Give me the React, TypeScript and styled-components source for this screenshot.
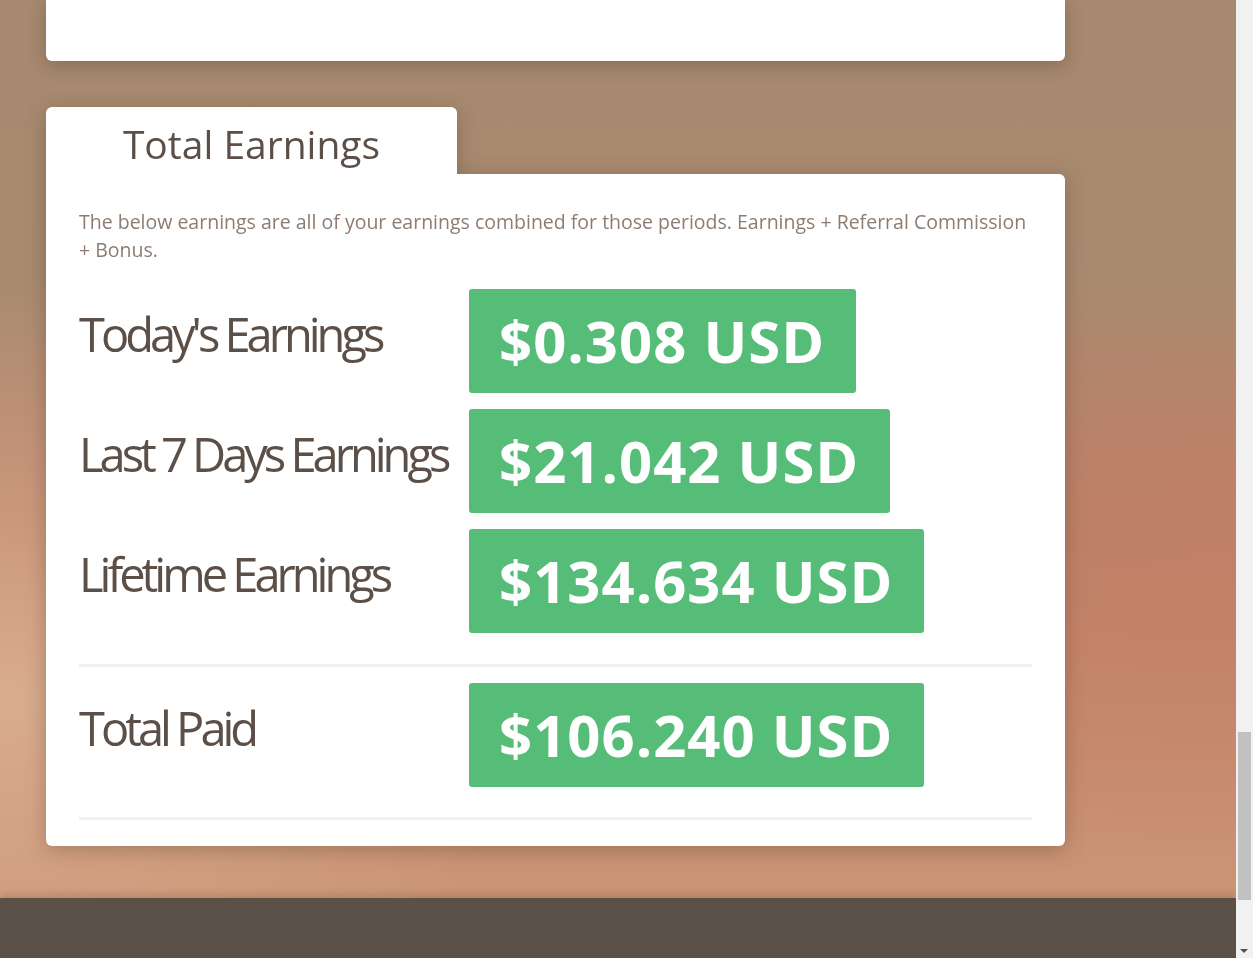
import React from "react";
import styled, { createGlobalStyle } from "styled-components";

const GlobalStyle = createGlobalStyle`
  html, body {
    margin: 0;
    padding: 0;
    overflow: hidden;
  }
  body {
    font-family: "Open Sans", "Noto Sans", sans-serif;
  }
`;

type Earning = {
  label: string;
  amount: string;
};

const periods: Earning[] = [
  { label: "Today's Earnings", amount: "$0.308 USD" },
  { label: "Last 7 Days Earnings", amount: "$21.042 USD" },
  { label: "Lifetime Earnings", amount: "$134.634 USD" },
];

const paid: Earning = { label: "Total Paid", amount: "$106.240 USD" };

const EarningRow = ({ label, amount }: Earning) => (
  <Row>
    <Label>{label}</Label>
    <Amount>{amount}</Amount>
  </Row>
);

const App = () => {
  return (
    <>
      <GlobalStyle />
      <Window>
        <Page>
          <Content>
            <Column>
              <PrevCard />
              <Section>
                <Tab>Total Earnings</Tab>
                <Card>
                  <Description>
                    The below earnings are all of your earnings combined for
                    those periods. Earnings + Referral Commission + Bonus.
                  </Description>
                  <Rows>
                    {periods.map((p) => (
                      <EarningRow key={p.label} {...p} />
                    ))}
                  </Rows>
                  <Divider />
                  <EarningRow {...paid} />
                  <Divider />
                </Card>
              </Section>
            </Column>
          </Content>
          <Footer />
        </Page>
        <Scrollbar>
          <Thumb />
          <ArrowDown />
        </Scrollbar>
      </Window>
    </>
  );
};

const Window = styled.div`
  display: flex;
  width: 100vw;
  height: 100vh;
`;

const Page = styled.div`
  flex: 1;
  display: flex;
  flex-direction: column;
  min-width: 0;
`;

const Content = styled.main`
  flex: 1;
  padding-left: 46px;
  background:
    radial-gradient(
      ellipse 520px 420px at 0% 78%,
      rgba(218, 174, 146, 0.95) 0%,
      rgba(214, 166, 136, 0.6) 45%,
      rgba(214, 166, 136, 0) 100%
    ),
    radial-gradient(
      ellipse 700px 300px at 100% 62%,
      rgba(196, 128, 102, 0.7) 0%,
      rgba(196, 128, 102, 0) 100%
    ),
    linear-gradient(
      to bottom,
      #a6896e 0%,
      #a88a6f 34%,
      #b88069 58%,
      #c4866b 72%,
      #cb9576 100%
    );
`;

const Column = styled.div`
  width: 1019px;
  display: flex;
  flex-direction: column;
  gap: 46px;
`;

const PrevCard = styled.div`
  height: 61px;
  background: #fff;
  border-radius: 0 0 6px 6px;
  box-shadow: 0 4px 18px rgba(60, 40, 25, 0.3);
`;

const Section = styled.section`
  display: flex;
  flex-direction: column;
  filter: drop-shadow(0 4px 10px rgba(60, 40, 25, 0.3));
`;

const Tab = styled.h2`
  margin: 0;
  width: 411px;
  height: 67px;
  box-sizing: border-box;
  padding-top: 13px;
  background: #fff;
  border-radius: 6px 6px 0 0;
  text-align: center;
  font-size: 39px;
  font-weight: 400;
  line-height: 48px;
  color: #5b4f47;
`;

const Card = styled.div`
  background: #fff;
  border-radius: 0 6px 6px 6px;
  padding: 34px 33px 26px;
`;

const Description = styled.p`
  margin: 0 0 25px;
  font-size: 19.5px;
  line-height: 28px;
  color: #8d7c71;
`;

const Rows = styled.div`
  display: flex;
  flex-direction: column;
  gap: 16px;
`;

const Row = styled.div`
  display: flex;
  align-items: flex-start;
`;

const Label = styled.h3`
  margin: 0;
  width: 390px;
  flex-shrink: 0;
  padding-top: 17px;
  font-size: 47px;
  font-weight: 400;
  line-height: 56px;
  letter-spacing: -4px;
  white-space: nowrap;
  color: #5b4f47;
`;

const Amount = styled.div`
  height: 104px;
  padding: 0 31px 0 30px;
  background: #55bd77;
  border-radius: 3px;
  color: #fff;
  font-size: 58px;
  font-weight: 700;
  line-height: 104px;
  letter-spacing: 1px;
  white-space: nowrap;
`;

const Divider = styled.hr`
  margin: 31px 0 16px;
  border: none;
  height: 3px;
  background: #f3efeb;

  &:last-child {
    margin: 30px 0 0;
  }
`;

const Footer = styled.footer`
  height: 60px;
  flex-shrink: 0;
  background: #5b5047;
  box-shadow: 0 -3px 8px rgba(60, 40, 25, 0.2);
`;

const Scrollbar = styled.div`
  position: relative;
  width: 17px;
  flex-shrink: 0;
  background: #f1f1f1;
`;

const Thumb = styled.div`
  position: absolute;
  left: 2px;
  right: 2px;
  top: 732px;
  height: 168px;
  background: #c1c1c1;
`;

const ArrowDown = styled.div`
  position: absolute;
  left: 4px;
  bottom: 5px;
  width: 0;
  height: 0;
  border-left: 4px solid transparent;
  border-right: 4px solid transparent;
  border-top: 4px solid #505050;
`;

export default App;
